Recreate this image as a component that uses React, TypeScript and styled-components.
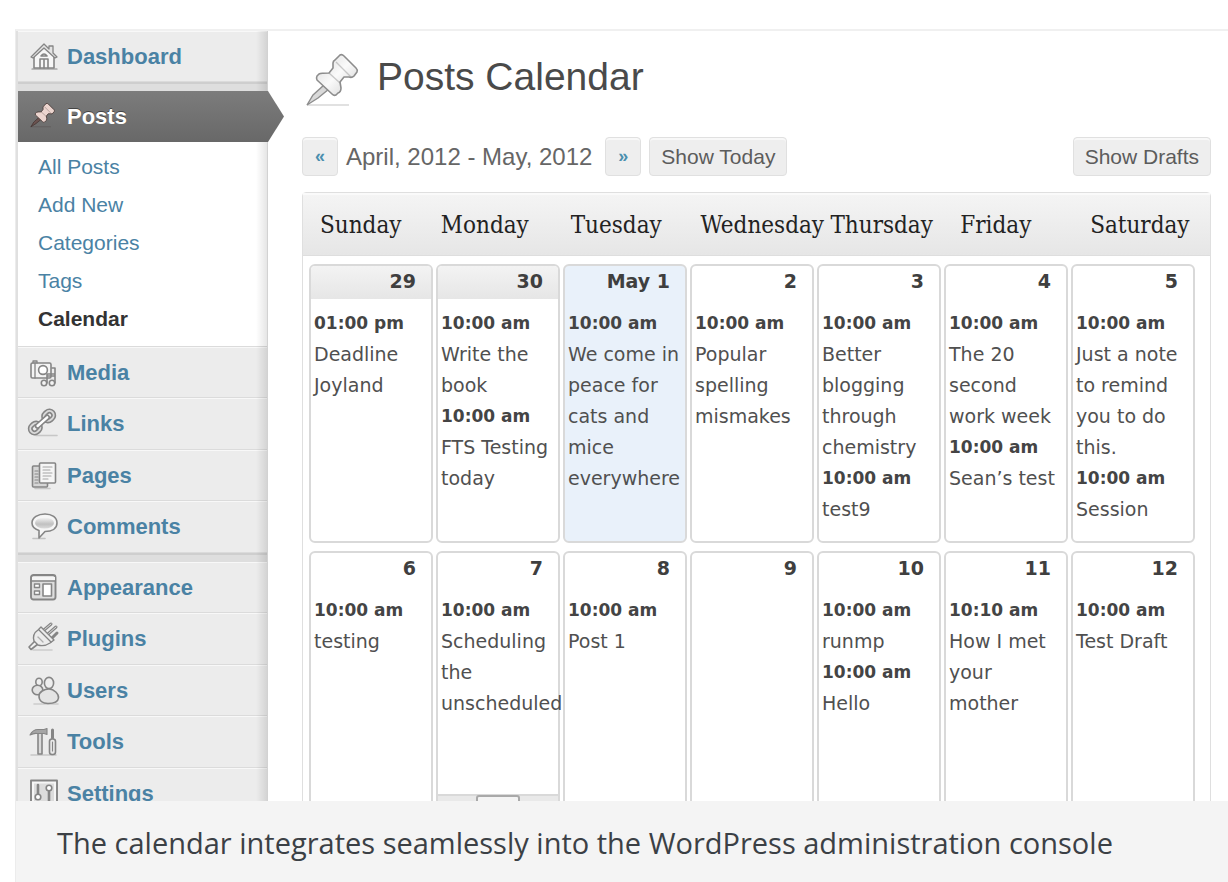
import React from "react";
import styled, { createGlobalStyle } from "styled-components";

const GlobalStyle = createGlobalStyle`
  *, *::before, *::after { box-sizing: border-box; }
  body {
    margin: 0;
    background: #fff;
    font-family: "Liberation Sans", Arial, sans-serif;
  }
  ul { list-style: none; margin: 0; padding: 0; }
  a { text-decoration: none; color: inherit; }
`;

const Figure = styled.figure`
  display: flex;
  flex-direction: column;
  height: 100vh;
  margin: 0;
  padding: 29px 0 0 15px;
`;

const Frame = styled.div`
  display: flex;
  align-items: stretch;
  flex: 1 1 0;
  min-height: 0;
  overflow: hidden;
  border-top: 2px solid #f0f0f0;
  border-left: 1px solid #ececec;
`;

const Caption = styled.figcaption`
  padding: 20px 41px 17px;
  border-left: 1px solid #ececec;
  background: #f4f4f4;
  color: #3b4045;
  font: 29px/44px "Open Sans", sans-serif;
`;

/* Sidebar */

const Sidebar = styled.nav`
  position: relative;
  flex: 0 0 252px;
  border-left: 2px solid #e0e0e0;
  border-right: 1px solid #d2d2d2;

  &::after {
    content: "";
    position: absolute;
    top: 0;
    right: 0;
    bottom: 0;
    width: 11px;
    background: linear-gradient(to right, rgba(0, 0, 0, 0), rgba(0, 0, 0, 0.1));
    pointer-events: none;
  }
`;

const MenuItem = styled.li`
  height: 51px;
  border-top: 1px solid #f8f8f8;
  border-bottom: 1px solid #dbdbdb;
  background: #ececec;

  &:nth-child(even) { height: 52px; }
`;

const MenuLink = styled.a`
  display: flex;
  align-items: center;
  gap: 9px;
  height: 100%;
  padding-left: 12px;
  color: #4a82a4;
  font-size: 22px;
  font-weight: bold;
`;

const CurrentLink = styled(MenuLink)`
  position: relative;
  z-index: 1;
  height: 51px;
  margin-right: -17px;
  background: linear-gradient(#7c7c7c, #686868);
  clip-path: polygon(0 0, calc(100% - 16px) 0, 100% 50%, calc(100% - 16px) 100%, 0 100%);
  color: #fff;
  text-shadow: 0 -1px 0 #444;
`;

const Separator = styled.div`
  height: 9px;
  border-top: 2px solid #cecece;
  background: #dedede;
`;

const SubMenu = styled.ul`
  padding: 6px 0 8px 20px;
  border-bottom: 1px solid #dbdbdb;
`;

const SubLink = styled.a<{ $current?: boolean }>`
  display: block;
  color: ${(p) => (p.$current ? "#333" : "#4a82a4")};
  font-size: 21px;
  font-weight: ${(p) => (p.$current ? "bold" : "normal")};
  line-height: 38px;
`;

const MenuIcon = styled.svg`
  flex: none;
  width: 28px;
  height: 28px;
  overflow: visible;
  fill: none;
  stroke: #858585;
  stroke-width: 1.6;
  stroke-linejoin: round;
  stroke-linecap: round;
`;

/* Main column */

const Main = styled.main`
  flex: 1;
  min-width: 0;
  padding: 17px 17px 0 34px;
`;

const TitleRow = styled.header`
  display: flex;
  align-items: flex-end;
  gap: 18px;
  height: 58px;
  padding-left: 3px;
`;

const Title = styled.h1`
  margin: 0;
  color: #4a4a4a;
  font-size: 39px;
  font-weight: normal;
  line-height: 58px;
`;

const TitleIcon = styled.svg`
  width: 54px;
  height: 52px;
  overflow: visible;
`;

const Toolbar = styled.div`
  display: flex;
  align-items: center;
  margin: 31px 0 16px;
`;

const Button = styled.button`
  height: 39px;
  padding: 0 11px;
  border: 1px solid #e0e0e0;
  border-radius: 4px;
  background: #eee;
  box-shadow: inset 0 2px 0 #f8f8f8;
  color: #5c5c5c;
  font: 21px "Liberation Sans", Arial, sans-serif;
  white-space: nowrap;
`;

const StepButton = styled(Button)`
  width: 36px;
  padding: 0;
  color: #4a8fae;
  font-size: 18px;
  font-weight: bold;
`;

const Range = styled.span`
  margin: 0 13px 0 8px;
  color: #666;
  font-size: 24px;
  white-space: nowrap;
`;

const TodayButton = styled(Button)`
  margin: 0 auto 0 8px;
`;

const Calendar = styled.table`
  display: block;
  border: 1px solid #dfdfdf;
  border-radius: 4px 4px 0 0;
`;

const WeekHead = styled.thead`
  display: block;
  border-top: 2px solid #fafafa;
  border-bottom: 1px solid #dedede;
  background: linear-gradient(#f4f4f4, #e6e6e6);
`;

const HeadRow = styled.tr`
  display: grid;
  grid-template-columns: 121fr repeat(5, 130fr) 120fr;
  padding-left: 17px;
`;

const HeadCell = styled.th`
  min-width: 0;
  padding: 0;
  color: #222;
  font: 24px/60px "DejaVu Serif Condensed", "DejaVu Serif", serif;
  text-align: left;
  white-space: nowrap;
`;

const Weeks = styled.tbody`
  display: grid;
  gap: 8px;
  padding: 8px 15px 8px 6px;
`;

const Week = styled.tr`
  display: grid;
  grid-template-columns: repeat(7, minmax(0, 1fr));
  gap: 3px;
`;

const Day = styled.td<{ $today?: boolean }>`
  display: flex;
  flex-direction: column;
  min-height: 279px;
  padding: 0;
  border: 2px solid #d9d9d9;
  border-radius: 6px;
  background: ${(p) => (p.$today ? "#e9f1fa" : "#fff")};
  color: #505050;
  font: 19px/31px "DejaVu Sans", Verdana, sans-serif;
`;

const DayNumber = styled.div<{ $past?: boolean }>`
  height: 33px;
  padding-right: 15px;
  border-radius: 4px 4px 0 0;
  background: ${(p) => (p.$past ? "linear-gradient(#f3f3f3, #e6e6e6)" : "none")};
  color: #3f3f3f;
  font-weight: bold;
  text-align: right;
`;

const Posts = styled.ul`
  flex: 1;
  && { padding: 9px 3px 0; }
`;

const Time = styled.strong`
  display: block;
  color: #444;
  font-size: 17px;
  white-space: nowrap;
`;

const AddTray = styled.div`
  display: flex;
  justify-content: center;
  height: 34px;
  border-top: 2px solid #d9d9d9;
  background: #e9e9e9;
`;

const AddButton = styled.button`
  width: 44px;
  height: 28px;
  margin-top: -1px;
  border: 2px solid #a9a9a9;
  border-radius: 3px;
  background: #f4f4f4;
`;

type PinColors = { head: string; line: string; needle: string };

const PinShape = ({ head, line, needle }: PinColors) => (
  <>
    <path d="M2 51H44" stroke={line} strokeOpacity=".35" strokeWidth="1.5" />
    <path d="M19 31L8 41L2 51L13 44L24 35Z" fill={needle} stroke={line} strokeWidth="1.4" />
    <path
      d="M35 1Q37 0 39 2L51 14Q53 16 52 18L49 22Q47 24 44 23L39 23L35 28L36 34Q36 38 33 39L31 41Q29 42 27 40L12 26Q11 24 12 22L14 20Q16 19 24 19L28 14L28 9Q28 7 30 6Z"
      fill={head}
      stroke={line}
      strokeWidth="1.6"
      strokeLinejoin="round"
    />
    <path d="M31 8L46 23M24 19L35 29" fill="none" stroke={line} strokeOpacity=".45" strokeWidth="1.4" />
  </>
);

const icons: Record<string, React.ReactNode> = {
  Dashboard: (
    <MenuIcon viewBox="0 0 28 28" aria-hidden="true">
      <path d="M4 13V25H24V13L14 4Z" fill="#f7f7f7" />
      <path d="M1 14L14 1L19 6V3H23V10L27 14L25 15L14 5L3 15Z" fill="#e4e4e4" strokeWidth="1.3" />
      <path d="M10 25V16H18V25M14 16V25M11 13Q14 9 17 13Z" />
      <path d="M2 26H27" strokeWidth="1.2" />
    </MenuIcon>
  ),
  Media: (
    <MenuIcon viewBox="0 0 28 28" aria-hidden="true">
      <rect x="1" y="4" width="20" height="15" rx="1.5" fill="#f4f4f4" />
      <path d="M3 4V2H7V4M5 4V19" strokeWidth="1.3" />
      <circle cx="13" cy="11" r="4.4" fill="#fff" />
      <path d="M17 24V15H25V24M17 17H25V9H22" fill="none" />
      <circle cx="14" cy="24" r="2.7" fill="#f4f4f4" />
      <circle cx="22" cy="24" r="2.7" fill="#f4f4f4" />
    </MenuIcon>
  ),
  Links: (
    <MenuIcon viewBox="0 0 28 28" aria-hidden="true">
      <path d="M6 25.5H27" strokeOpacity=".35" />
      <g transform="rotate(-42 12 12)">
        <rect x="-4" y="6" width="14" height="12" rx="6" fill="#dadada" />
        <rect x="-.5" y="9.5" width="7" height="5" rx="2.5" fill="#efefef" />
        <rect x="14" y="6" width="14" height="12" rx="6" fill="#dadada" />
        <rect x="17.5" y="9.5" width="7" height="5" rx="2.5" fill="#efefef" />
        <rect x="4" y="10" width="17" height="4" rx="2" fill="#fff" />
      </g>
    </MenuIcon>
  ),
  Pages: (
    <MenuIcon viewBox="0 0 28 28" aria-hidden="true">
      <rect x="2.5" y="4" width="15" height="21" rx="1" fill="#d6d6d6" />
      <path d="M5 9H8M5 12H8M5 15H8M5 18H8M5 21H8" strokeWidth="1.2" />
      <rect x="9.5" y="1" width="16" height="20" rx="1" fill="#f6f6f6" />
      <path d="M13 5H22M13 8H20M13 11H22M13 14H21M13 17H18" strokeWidth="1.1" strokeOpacity=".7" />
      <path d="M5 26.5H20" strokeOpacity=".35" />
    </MenuIcon>
  ),
  Comments: (
    <MenuIcon viewBox="0 0 28 28" aria-hidden="true">
      <defs>
        <linearGradient id="bubble" x1="0" y1="0" x2="0" y2="1">
          <stop offset="0" stopColor="#f4f4f4" />
          <stop offset=".6" stopColor="#c0c0c0" />
          <stop offset="1" stopColor="#dadada" />
        </linearGradient>
      </defs>
      <path
        d="M15 1C22 1 27 4.5 27 10S22 18.500 15 18.500L9 25V17.500C4.500 16 2 13.500 2 10C2 4.500 8 1 15 1Z"
        fill="#f6f6f6"
      />
      <ellipse cx="14.500" cy="10" rx="9.500" ry="5.500" fill="url(#bubble)" stroke="none" />
      <path d="M3 25.500H15" strokeOpacity=".4" />
    </MenuIcon>
  ),
  Appearance: (
    <MenuIcon viewBox="0 0 28 28" aria-hidden="true">
      <rect x="1" y="1" width="24.500" height="24.500" rx="2.500" fill="#ddd" strokeWidth="1.9" />
      <path d="M2 3H25V6.500H2Z" fill="#f5f5f5" stroke="none" />
      <path d="M1 7H25" />
      <rect x="4.500" y="10" width="5" height="3.500" fill="#fff" strokeWidth="1.4" />
      <rect x="4.500" y="17" width="5" height="3.500" fill="#fff" strokeWidth="1.4" />
      <rect x="13" y="10" width="8.500" height="12" fill="#fff" strokeWidth="1.6" />
    </MenuIcon>
  ),
  Plugins: (
    <MenuIcon viewBox="0 0 28 28" aria-hidden="true">
      <path d="M3 25H22" strokeOpacity=".3" />
      <path d="M5 16L-1 22L1 24.500L8 19" fill="#f2f2f2" />
      <path d="M14 5L21 -1M18 9L26 2M22 13L27 8" strokeWidth="3" />
      <path d="M14 5L21 -1M18 9L26 2" stroke="#f2f2f2" strokeWidth=".8" />
      <path d="M11 2L24 15L20 18Q14 22 8 20L4 16Q2 9 8 5Z" fill="#ececec" strokeWidth="1.4" />
      <path d="M9 5L21 17" strokeWidth="1.3" />
      <path d="M8 12L13 17" strokeWidth="1.3" strokeOpacity=".6" />
    </MenuIcon>
  ),
  Users: (
    <MenuIcon viewBox="0 0 28 28" aria-hidden="true">
      <path d="M4 27H28" strokeOpacity=".3" />
      <ellipse cx="9" cy="5" rx="3.2" ry="3.8" fill="#eee" />
      <ellipse cx="7.500" cy="13" rx="5.300" ry="4.700" fill="#e2e2e2" />
      <ellipse cx="19" cy="6" rx="4.600" ry="5.600" fill="#eee" />
      <path d="M9 19C9 15 14 12 19 12S29 17 28.500 21C28 25 23 26.500 18 26.500S9 24 9 19Z" fill="#e4e4e4" />
    </MenuIcon>
  ),
  Tools: (
    <MenuIcon viewBox="0 0 28 28" aria-hidden="true">
      <path d="M1 27H26" strokeOpacity=".35" />
      <path d="M8 6V26H12V6" fill="#dadada" />
      <path d="M0 7Q3 1 9 1.500H14L17 .5V6.500L14 5.500H7Q4 5 0 7Z" fill="#a5a5a5" strokeWidth="1.1" />
      <path d="M22.500 2V10" strokeWidth="3" />
      <rect x="19.500" y="11" width="6" height="15.500" rx="2.500" fill="#e8e8e8" />
      <path d="M22.500 14V23" strokeWidth="1.100" />
    </MenuIcon>
  ),
  Settings: (
    <MenuIcon viewBox="0 0 28 28" aria-hidden="true">
      <rect x="1" y=".5" width="26" height="26" fill="#f6f6f6" strokeWidth="1.900" />
      <rect x="4" y="3.500" width="20" height="20" fill="#dcdcdc" stroke="none" />
      <path d="M8 5V14M19 11V22" strokeWidth="2.600" />
      <circle cx="8" cy="17" r="2.800" fill="#fff" />
      <circle cx="19" cy="8" r="2.800" fill="#fff" />
    </MenuIcon>
  ),
};

const Item = ({ name }: { name: string }) => (
  <MenuItem>
    <MenuLink href="#">
      {icons[name]}
      {name}
    </MenuLink>
  </MenuItem>
);

type Post = [time: string, title: string];
type DayData = { label: string; past?: boolean; today?: boolean; tray?: boolean; posts: Post[] };

const am = "10:00 am";

const weeks: DayData[][] = [
  [
    { label: "29", past: true, posts: [["01:00 pm", "Deadline Joyland"]] },
    { label: "30", past: true, posts: [[am, "Write the book"], [am, "FTS Testing today"]] },
    { label: "May 1", today: true, posts: [[am, "We come in peace for cats and mice everywhere"]] },
    { label: "2", posts: [[am, "Popular spelling mismakes"]] },
    { label: "3", posts: [[am, "Better blogging through chemistry"], [am, "test9"]] },
    { label: "4", posts: [[am, "The 20 second work week"], [am, "Sean’s test"]] },
    { label: "5", posts: [[am, "Just a note to remind you to do this."], [am, "Session"]] },
  ],
  [
    { label: "6", posts: [[am, "testing"]] },
    { label: "7", tray: true, posts: [[am, "Scheduling the unscheduled"]] },
    { label: "8", posts: [[am, "Post 1"]] },
    { label: "9", posts: [] },
    { label: "10", posts: [[am, "runmp"], [am, "Hello"]] },
    { label: "11", posts: [["10:10 am", "How I met your mother"]] },
    { label: "12", posts: [[am, "Test Draft"]] },
  ],
];

const weekdays = ["Sunday", "Monday", "Tuesday", "Wednesday", "Thursday", "Friday", "Saturday"];

export default function App() {
  return (
    <>
      <GlobalStyle />
      <Figure>
        <Frame>
          <Sidebar aria-label="Admin menu">
            <ul>
              <Item name="Dashboard" />
            </ul>
            <Separator />
            <CurrentLink href="#">
              <MenuIcon viewBox="0 0 60 60" aria-hidden="true">
                <PinShape head="#ecd5cf" line="#3d2c2a" needle="#6b5350" />
              </MenuIcon>
              Posts
            </CurrentLink>
            <SubMenu>
              {["All Posts", "Add New", "Categories", "Tags"].map((t) => (
                <li key={t}>
                  <SubLink href="#">{t}</SubLink>
                </li>
              ))}
              <li>
                <SubLink href="#" $current aria-current="page">
                  Calendar
                </SubLink>
              </li>
            </SubMenu>
            <ul>
              {["Media", "Links", "Pages", "Comments"].map((t) => (
                <Item key={t} name={t} />
              ))}
            </ul>
            <Separator />
            <ul>
              {["Appearance", "Plugins", "Users", "Tools", "Settings"].map((t) => (
                <Item key={t} name={t} />
              ))}
            </ul>
          </Sidebar>

          <Main>
            <TitleRow>
              <TitleIcon viewBox="0 0 54 52" aria-hidden="true">
                <defs>
                  <linearGradient id="steel" x1="0" y1="0" x2="1" y2="1">
                    <stop offset="0" stopColor="#d8d8d8" />
                    <stop offset=".5" stopColor="#fafafa" />
                    <stop offset="1" stopColor="#cfcfcf" />
                  </linearGradient>
                </defs>
                <PinShape head="url(#steel)" line="#8d8d8d" needle="#d9d9d9" />
              </TitleIcon>
              <Title>Posts Calendar</Title>
            </TitleRow>

            <Toolbar>
              <StepButton aria-label="Previous weeks">«</StepButton>
              <Range>April, 2012 - May, 2012</Range>
              <StepButton aria-label="Next weeks">»</StepButton>
              <TodayButton>Show Today</TodayButton>
              <Button>Show Drafts</Button>
            </Toolbar>

            <Calendar>
              <WeekHead>
                <HeadRow>
                  {weekdays.map((d) => (
                    <HeadCell key={d} scope="col">
                      {d}
                    </HeadCell>
                  ))}
                </HeadRow>
              </WeekHead>
              <Weeks>
                {weeks.map((week) => (
                  <Week key={week[0].label}>
                    {week.map((day) => (
                      <Day key={day.label} $today={day.today}>
                        <DayNumber $past={day.past}>{day.label}</DayNumber>
                        <Posts>
                          {day.posts.map(([time, title]) => (
                            <li key={title}>
                              <Time>{time}</Time>
                              {title}
                            </li>
                          ))}
                        </Posts>
                        {day.tray && (
                          <AddTray>
                            <AddButton aria-label="Add a post" />
                          </AddTray>
                        )}
                      </Day>
                    ))}
                  </Week>
                ))}
              </Weeks>
            </Calendar>
          </Main>
        </Frame>
        <Caption>The calendar integrates seamlessly into the WordPress administration console</Caption>
      </Figure>
    </>
  );
}
